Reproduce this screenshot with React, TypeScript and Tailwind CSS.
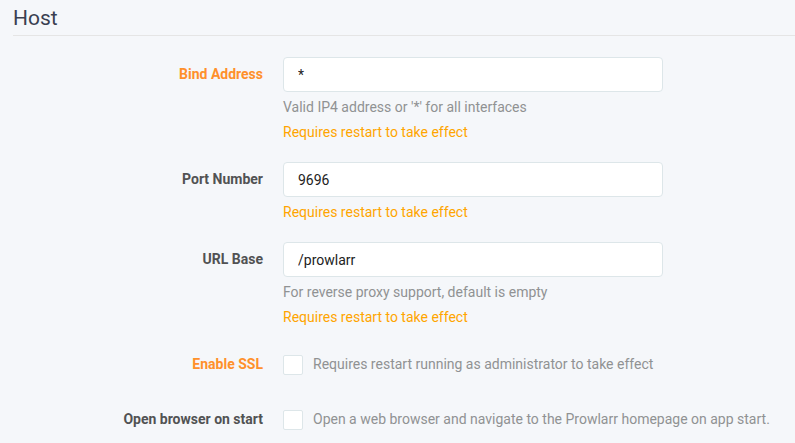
import React from "react";

type Field = {
  label: string;
  advanced?: boolean;
  value?: string;
  checkbox?: boolean;
  help?: string;
  warning?: string;
};

const fields: Field[] = [
  {
    label: "Bind Address",
    advanced: true,
    value: "*",
    help: "Valid IP4 address or '*' for all interfaces",
    warning: "Requires restart to take effect",
  },
  { label: "Port Number", value: "9696", warning: "Requires restart to take effect" },
  {
    label: "URL Base",
    value: "/prowlarr",
    help: "For reverse proxy support, default is empty",
    warning: "Requires restart to take effect",
  },
  {
    label: "Enable SSL",
    advanced: true,
    checkbox: true,
    help: "Requires restart running as administrator to take effect",
  },
  {
    label: "Open browser on start",
    checkbox: true,
    help: "Open a web browser and navigate to the Prowlarr homepage on app start.",
  },
];

function FormRow({ field }: { field: Field }) {
  return (
    <div className="mb-[20px] flex">
      <label
        className={`mr-[20px] w-[250px] shrink-0 text-right text-[14px] font-bold leading-[35px] ${
          field.advanced ? "text-[#ff902b]" : "text-[#515253]"
        }`}
      >
        {field.label}
      </label>
      {field.checkbox ? (
        <div className="flex h-[35px] items-center">
          <span className="h-[20px] w-[20px] shrink-0 rounded-[2px] border border-[#dde6e9] bg-white" />
          <span className="ml-[10px] text-[14px] text-[#909293]">{field.help}</span>
        </div>
      ) : (
        <div className="flex flex-col">
          <input
            readOnly
            value={field.value}
            className="h-[35px] w-[380px] rounded-[4px] border border-[#dde6e9] bg-white px-[14px] text-[14px] text-[#222] outline-none"
          />
          {field.help && (
            <div className="mt-[5px] text-[14px] leading-[20px] text-[#909293]">{field.help}</div>
          )}
          {field.warning && (
            <div className="mt-[5px] text-[14px] leading-[20px] text-[#ffa500]">{field.warning}</div>
          )}
        </div>
      )}
    </div>
  );
}

export default function App() {
  return (
    <div
      className="min-h-screen bg-[#f5f7fa] pl-[13px]"
      style={{ fontFamily: "Roboto, 'Liberation Sans', sans-serif" }}
    >
      <h1 className="mb-[21px] border-b border-[#e5e5e5] pt-[2px] text-[21px] leading-[33px] text-[#3a3f51]">
        Host
      </h1>
      {fields.map((f) => (
        <FormRow key={f.label} field={f} />
      ))}
    </div>
  );
}
